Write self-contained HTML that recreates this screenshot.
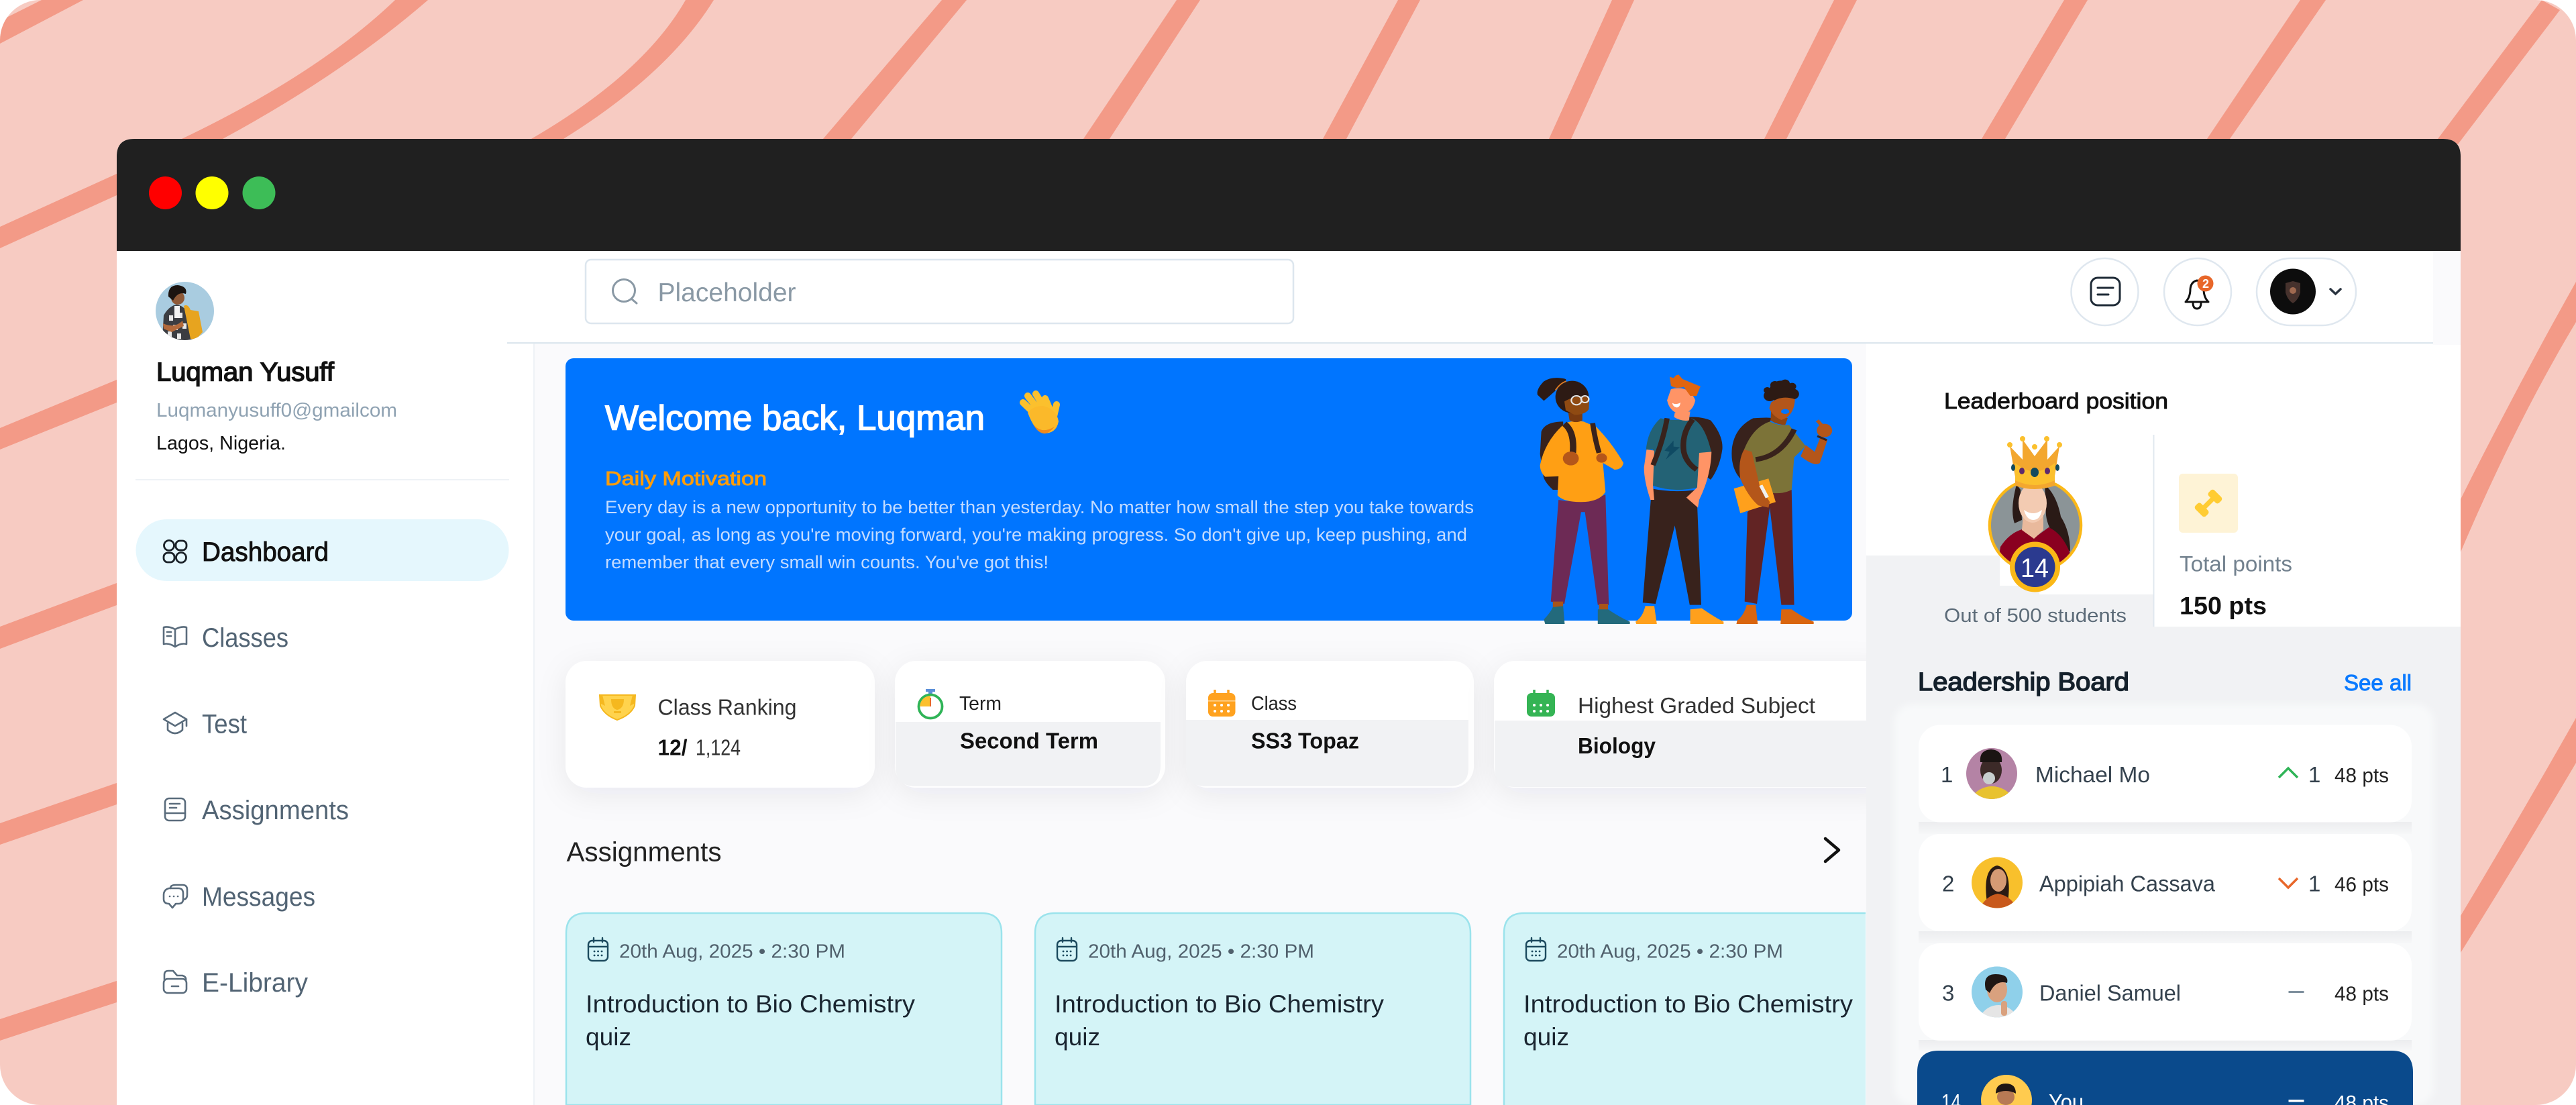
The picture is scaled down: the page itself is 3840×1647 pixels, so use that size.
<!DOCTYPE html>
<html lang="en"><head><meta charset="utf-8"><title>Dashboard</title>
<style>
html,body{margin:0;padding:0;background:#fff;width:3840px;height:1647px;overflow:hidden}
svg{display:block}
text{font-family:"Liberation Sans",sans-serif;fill:#222}
.m{stroke:currentColor;stroke-width:.9}
.h{stroke:currentColor;stroke-width:1.5}
.ic{fill:none;stroke:#5a6c7c;stroke-width:2.6;stroke-linecap:round;stroke-linejoin:round}
</style></head><body>
<svg xmlns="http://www.w3.org/2000/svg" width="3840" height="1647" viewBox="0 0 3840 1647">
<defs>
<clipPath id="pg"><rect width="3840" height="1647" rx="60"/></clipPath>
<clipPath id="main"><rect x="796" y="511" width="1986" height="1136"/></clipPath>
<clipPath id="av0"><circle cx="275.500" cy="463.500" r="43.500"/></clipPath>
<clipPath id="avB"><circle cx="3034" cy="783" r="66"/></clipPath>
<clipPath id="av1"><circle cx="2969" cy="1153" r="38"/></clipPath>
<clipPath id="av2"><circle cx="2977" cy="1315.500" r="38"/></clipPath>
<clipPath id="av3"><circle cx="2977" cy="1478.500" r="38"/></clipPath>
<clipPath id="av4"><circle cx="2991" cy="1640" r="38"/></clipPath>
<filter id="sh" x="-20%" y="-40%" width="140%" height="190%"><feDropShadow dx="0" dy="10" stdDeviation="22" flood-color="#1c2a3a" flood-opacity=".07"/></filter>
<filter id="soft" x="-5%" y="-5%" width="110%" height="110%"><feGaussianBlur stdDeviation="5"/></filter>
<linearGradient id="gap" x1="0" y1="0" x2="0" y2="1"><stop offset="0" stop-color="#ecedef"/><stop offset="1" stop-color="#f6f7f8"/></linearGradient>
<g id="cal" fill="none" stroke="#1c4a5e" stroke-width="2.4" stroke-linecap="round"><rect x="877" y="1402" width="29" height="30" rx="6"/><path d="M877 1411H906M885 1398V1404M898 1398V1404"/><path d="M886 1418h.1M891.500 1418h.1M897 1418h.1M886 1424h.1M891.500 1424h.1M897 1424h.1" stroke-width="2.800"/></g>
</defs>
<g clip-path="url(#pg)">
<rect width="3840" height="1647" fill="#f7cbc2"/>
<g fill="#f39a87">
<path d="M62 0H124L0 65V30L12 25Z"/>
<path d="M589 0H638Q511 110 332 207H271Q474 110 589 0Z" opacity="0"/>
<path d="M589 0H638Q570 130 500 230L332 320L271 207Z" opacity="0"/>
<path d="M589 0H638C590 98 470 300 332 480H271C390 320 530 110 589 0Z" opacity="0"/>
<path d="M589 0H638Q565 125 498 225T400 340L332 207H271L370 110Z" opacity="0"/>
<path d="M589 0H638Q560 155 400 207H332Q520 150 589 0Z" opacity="0"/>
<path d="M589 0H638C590 95 530 190 470 207H271C360 190 520 110 589 0Z" opacity="0"/>
<path d="M589 0H638Q515 190 332 207H271Q480 180 589 0Z" opacity="0"/>
<polygon points="589,0 638,0 497,107 332,207 271,207 452,107" opacity="0"/>
<path d="M589 0H638Q511 110 332 207H271Q474 110 589 0Z"/>
<polygon points="174,259 174,291 0,370 0,338"/>
<polygon points="174,566 174,600 0,670 0,638"/>
<polygon points="174,869 174,902 0,967 0,934"/>
<polygon points="174,1167 174,1199 0,1259 0,1227"/>
<polygon points="174,1462 174,1494 0,1551 0,1519"/>
<path d="M1022 0H1064Q996 110 840 207H792Q959 110 1022 0Z"/>
<polygon points="1404,0 1441,0 1269,207 1227,207"/>
<polygon points="1754,0 1789,0 1654,207 1615,207"/>
<polygon points="2084,0 2117,0 2007,207 1972,207"/>
<polygon points="2403,0 2436,0 2342,207 2309,207"/>
<polygon points="2734,0 2768,0 2663,207 2630,207"/>
<polygon points="3077,0 3112,0 2989,207 2954,207"/>
<polygon points="3429,0 3467,0 3324,207 3290,207"/>
<polygon points="3789,0 3816,15 3664,215 3634,207"/>
<path d="M3668 744Q3750 580 3840 420V480Q3750 630 3668 823Z"/>
<path d="M3668 1365Q3755 1220 3840 1070V1137Q3755 1281 3668 1420Z"/>
</g>
<path d="M174 1647V233Q174 207 200 207H3642Q3668 207 3668 233V1647Z" fill="#fff"/>
<path d="M174 374V233Q174 207 200 207H3642Q3668 207 3668 233V374Z" fill="#202020"/>
<rect x="796" y="511" width="1986" height="1136" fill="#fafafc"/>
<rect x="3627" y="374" width="41" height="140" fill="#fafafc"/>
<path d="M2782 828H2981V873H3040V886H3210V934H3668V1647H2782Z" fill="#f1f2f4"/>
<rect x="2824" y="1050" width="804" height="597" rx="26" fill="#f8f9fa" filter="url(#soft)"/>
<rect x="2860" y="1225" width="735" height="18" fill="url(#gap)"/>
<rect x="2860" y="1388" width="735" height="18" fill="url(#gap)"/>
<rect x="2860" y="1550" width="735" height="16" fill="url(#gap)"/>
<circle cx="246.500" cy="287.500" r="24.500" fill="#ff0000"/>
<circle cx="316" cy="287.500" r="24.500" fill="#ffff00"/>
<circle cx="386" cy="287.500" r="24.500" fill="#3dbd57"/>

<!-- sidebar -->
<rect x="795" y="511" width="2" height="1136" fill="#eef2f6"/>
<rect x="756" y="510" width="2871" height="2.500" fill="#dfe8ef"/>
<rect x="202" y="714" width="557" height="2" fill="#eef2f6"/>
<g clip-path="url(#av0)"><rect x="232" y="420" width="87" height="87" fill="#a9cce0"/>
<path d="M242 507L244 470Q252 456 263 454Q276 456 282 470L288 507Z" fill="#3b3d42"/>
<path d="M252 470h6v8h-6zM266 466h6v8h-6zM258 484h7v8h-7zM272 482h6v8h-6zM250 494h6v8h-6zM264 497h6v8h-6z" fill="#e8e8e8"/>
<rect x="260" y="456" width="8" height="18" fill="#f3f3f3"/>
<path d="M274 456Q280 452 284 462L296 464L302 495L292 506L284 505Z" fill="#e7a41f"/>
<circle cx="265" cy="444" r="10" fill="#8f5a38"/><path d="M251 442Q250 425 265 425Q280 427 277 438Q265 434 258 448Z" fill="#1c1410"/>
<path d="M243 482Q260 490 272 478L274 486L256 495L244 490Z" fill="#b26a3c"/></g>
<text x="233" y="567.500" font-size="39" textLength="265" lengthAdjust="spacingAndGlyphs" class="h" color="#111" style="fill:#111">Luqman Yusuff</text>
<text x="233" y="621" font-size="29" textLength="359" lengthAdjust="spacingAndGlyphs" style="fill:#8fa2b2">Luqmanyusuff0@gmailcom</text>
<text x="233" y="670" font-size="29" textLength="193" lengthAdjust="spacingAndGlyphs" style="fill:#111">Lagos, Nigeria.</text>
<rect x="202.500" y="774" width="556" height="92" rx="46" fill="#e5f7fd"/>
<g fill="none" stroke="#1a2128" stroke-width="2.800"><circle cx="252" cy="813" r="7.500"/><rect x="262" y="806" width="16" height="14" rx="6"/><rect x="244" y="824" width="16" height="14" rx="6"/><circle cx="270" cy="831" r="7.500"/></g>
<text x="301" y="836" font-size="40" textLength="189" lengthAdjust="spacingAndGlyphs" class="m" color="#111" style="fill:#111">Dashboard</text>
<g class="ic"><path d="M261 938Q252 933 244 935V960Q252 958 261 964Q270 958 278 960V935Q270 933 261 938V964"/><path d="M249 942H255M249 948H255"/></g>
<text x="301" y="964" font-size="40" textLength="129" lengthAdjust="spacingAndGlyphs" style="fill:#526474">Classes</text>
<g class="ic"><path d="M261 1062L244 1072L261 1082L278 1072Z"/><path d="M250 1078V1088Q261 1098 272 1088V1078M278 1072V1082"/></g>
<text x="301" y="1092.500" font-size="40" textLength="67" lengthAdjust="spacingAndGlyphs" style="fill:#526474">Test</text>
<g class="ic"><rect x="246" y="1190" width="30" height="33" rx="6"/><path d="M246 1212H276M253 1198H268M253 1204H263"/></g>
<text x="301" y="1221" font-size="40" textLength="219" lengthAdjust="spacingAndGlyphs" style="fill:#526474">Assignments</text>
<g class="ic"><path d="M252 1324Q244 1326 244 1334V1340Q244 1347 252 1347L257 1353L262 1347H266Q273 1347 273 1340V1332Q273 1324 266 1324Z"/><path d="M254 1324Q254 1319 262 1319H272Q279 1319 279 1326V1334Q279 1340 273 1341"/><path d="M253 1336h.1M259 1336h.1M265 1336h.1"/></g>
<text x="301" y="1350" font-size="40" textLength="169" lengthAdjust="spacingAndGlyphs" style="fill:#526474">Messages</text>
<g class="ic"><path d="M245 1460V1453Q245 1447 251 1447H258L264 1454H272Q278 1456 277 1461"/><rect x="244" y="1459" width="34" height="21" rx="6"/><path d="M256 1470H266"/></g>
<text x="301" y="1478" font-size="40" textLength="158" lengthAdjust="spacingAndGlyphs" style="fill:#526474">E-Library</text>

<!-- topbar -->
<rect x="873" y="387" width="1055" height="95" rx="8" fill="#fff" stroke="#dde6ee" stroke-width="2.500"/>
<circle cx="930" cy="433" r="16.500" fill="none" stroke="#8a99a5" stroke-width="3"/><path d="M942 446L949 452" stroke="#8a99a5" stroke-width="3" stroke-linecap="round"/>
<text x="980.500" y="449" font-size="39" textLength="206" lengthAdjust="spacingAndGlyphs" style="fill:#8a99a5">Placeholder</text>
<circle cx="3137.500" cy="435" r="50" fill="#fff" stroke="#dfe7ef" stroke-width="2.500"/>
<rect x="3117" y="414" width="43" height="41" rx="10" fill="none" stroke="#1e2a36" stroke-width="3"/><path d="M3127 429H3150M3127 439H3143" stroke="#1e2a36" stroke-width="3" stroke-linecap="round"/>
<circle cx="3276" cy="435" r="50" fill="#fff" stroke="#dfe7ef" stroke-width="2.500"/>
<path d="M3258 450Q3265 443 3265 431Q3266 420 3275 418Q3285 420 3285 431Q3285 443 3292 450Z" fill="none" stroke="#111" stroke-width="3" stroke-linejoin="round"/><path d="M3269 451Q3269 460 3275 460Q3281 460 3281 451" fill="none" stroke="#111" stroke-width="3"/>
<circle cx="3287.500" cy="422.500" r="12" fill="#e8672a"/><text x="3283" y="429" font-size="18" font-weight="bold" style="fill:#fff">2</text>
<rect x="3364" y="385" width="148" height="100" rx="50" fill="#fff" stroke="#dfe7ef" stroke-width="2.500"/>
<circle cx="3418" cy="434.500" r="34" fill="#0d0d0d"/><path d="M3407 422L3418 419L3429 422L3429 436Q3426 447 3418 452Q3410 447 3407 436Z" fill="#46322d"/><circle cx="3418" cy="433" r="5" fill="#a06a50"/>
<path d="M3474 431L3481.500 438L3489 431" fill="none" stroke="#2a3440" stroke-width="3.500" stroke-linecap="round"/>

<!-- banner -->
<rect x="843" y="534" width="1918" height="391" rx="12" fill="#0075ff"/>
<text x="902" y="640.500" font-size="52" textLength="566" lengthAdjust="spacingAndGlyphs" class="h" color="#fff" style="fill:#fff">Welcome back, Luqman</text>
<g stroke="#fbc02d" stroke-width="10" stroke-linecap="round" fill="none"><path d="M1548 622L1525 600M1553 617L1532 590M1560 613L1544 587M1567 615L1558 594M1570 625L1575 603"/></g>
<path d="M1532 615Q1540 605 1555 605Q1575 610 1578 628Q1575 645 1558 646Q1543 645 1532 615Z" fill="#fbb92a"/><path d="M1540 632Q1552 648 1572 636Q1562 648 1555 646Q1546 644 1540 632Z" fill="#f08a1d"/>
<text x="902" y="723" font-size="29" textLength="241" lengthAdjust="spacingAndGlyphs" class="m" color="#ff9d0a" style="fill:#ff9d0a">Daily Motivation</text>
<text x="902" y="765" font-size="27" textLength="1295" lengthAdjust="spacingAndGlyphs" style="fill:#c4dcff">Every day is a new opportunity to be better than yesterday. No matter how small the step you take towards</text>
<text x="902" y="806" font-size="27" textLength="1285" lengthAdjust="spacingAndGlyphs" style="fill:#c4dcff">your goal, as long as you're moving forward, you're making progress. So don't give up, keep pushing, and</text>
<text x="902" y="847" font-size="27" textLength="661" lengthAdjust="spacingAndGlyphs" style="fill:#c4dcff">remember that every small win counts. You've got this!</text>

<!-- students -->
<g transform="translate(2200,500) scale(.3827,.3333)">
<path d="M255 430Q270 385 340 385L350 690L300 690Q262 650 262 620L250 530Z" fill="#38221c"/>
<path d="M322 735Q410 755 505 712L518 1205L475 1205L425 790L410 790L345 1200L292 1190Z" fill="#6d2a55"/>
<path d="M300 1190H340V1220H300ZM480 1200H515V1230H480Z" fill="#a8541a"/>
<path d="M270 1290L265 1270Q290 1240 300 1215L340 1210L346 1290ZM475 1290L475 1225L515 1225Q560 1260 600 1280L600 1290Z" fill="#236a7c"/>
<path d="M345 395Q370 378 420 385L470 410Q530 480 575 570Q570 600 540 600L495 570L505 700Q480 745 410 745Q340 745 318 715L322 630L270 632Q250 610 250 580Q270 470 345 395Z" fill="#ff9f14"/>
<path d="M345 395Q385 430 378 525" fill="none" stroke="#38221c" stroke-width="25"/><path d="M455 392Q465 470 480 525" fill="none" stroke="#38221c" stroke-width="20"/>
<circle cx="370" cy="550" r="31" fill="#b4561a"/><circle cx="490" cy="548" r="21" fill="#b4561a"/>
<path d="M360 345L415 350L415 380Q390 395 365 380Z" fill="#7a3a10"/>
<path d="M350 195Q300 180 265 205Q235 240 240 265L265 292Q310 250 352 200Z" fill="#2d1a14"/>
<ellipse cx="375" cy="275" rx="65" ry="72" fill="#2d1a14"/>
<path d="M345 295Q400 260 442 280L440 330Q425 355 385 355L350 335Z" fill="#8f4a12"/>
<g fill="none" stroke="#e6e6e6" stroke-width="6"><circle cx="392" cy="290" r="20"/><circle cx="425" cy="285" r="15"/></g>
<path d="M310 245Q330 212 352 205" fill="none" stroke="#e07b20" stroke-width="5"/>
<path d="M800 370Q860 355 915 380Q965 450 960 510Q950 590 915 645L860 600Z" fill="#38221c"/>
<path d="M685 685Q770 705 860 690L878 1205L833 1205L775 850L700 1200L650 1195Z" fill="#38221c"/>
<path d="M625 1290L622 1280Q650 1260 660 1210L695 1210L705 1290ZM835 1290L835 1225L880 1220Q930 1260 965 1280L965 1290Z" fill="#ffa01c"/>
<path d="M720 370Q770 385 840 370Q890 390 917 520L870 530L862 680Q770 705 685 670L690 510L663 510Q670 420 720 370Z" fill="#236275"/>
<path d="M665 510L695 515L690 670L695 735L680 735Q655 650 655 590ZM870 525L918 520Q915 630 870 735L865 770L820 725L862 680Z" fill="#ff9466"/>
<path d="M745 370Q730 470 690 580" fill="none" stroke="#38221c" stroke-width="20"/><path d="M845 375Q800 440 810 520Q820 570 860 600" fill="none" stroke="#38221c" stroke-width="22"/>
<path d="M770 470L735 515L755 520L740 555L795 500L770 497Z" fill="#0f4a63"/>
<path d="M775 345L835 340L830 380Q800 385 772 365Z" fill="#ff9466"/>
<path d="M760 240Q830 220 855 290Q845 345 800 352Q755 345 745 290Z" fill="#ff9466"/>
<path d="M755 185L770 190L780 178L790 175L805 195L875 228L860 270L835 270L810 230Q780 240 760 225Z" fill="#e0650f"/>
<path d="M765 302Q780 312 797 300Q795 322 782 322Q768 320 765 302Z" fill="#fff"/>
<path d="M1080 370Q1150 365 1150 370L1090 620L1030 640Q990 590 998 500Q1010 410 1080 370Z" fill="#38221c"/>
<path d="M1130 700L1230 690L1240 1205L1190 1205L1145 770L1095 1200L1047 1190L1058 790Z" fill="#622424"/>
<path d="M1015 1290L1018 1275Q1045 1250 1055 1205L1090 1205L1098 1290ZM1187 1290L1190 1225L1230 1225Q1280 1265 1316 1280L1316 1290Z" fill="#d9650f"/>
<path d="M1145 385Q1180 405 1220 400L1285 495L1240 545L1230 690Q1190 715 1120 700L1090 620L1045 510Q1080 410 1145 385Z" fill="#7c7338"/>
<path d="M1090 555Q1190 540 1240 420" fill="none" stroke="#38221c" stroke-width="22"/>
<path d="M1265 540L1285 490L1320 520L1340 460L1370 465L1340 570Q1320 590 1265 540Z" fill="#b4561a"/>
<circle cx="1358" cy="425" r="30" fill="#b4561a"/><path d="M1330 380L1350 405" stroke="#b4561a" stroke-width="14"/><path d="M1330 450L1367 468" stroke="#38221c" stroke-width="9"/>
<path d="M1005 685L1140 640L1168 745L1030 795Z" fill="#ffa01c"/>
<path d="M1045 510Q1020 560 1030 640Q1060 720 1100 760L1140 770L1145 745L1105 670L1075 520Z" fill="#b4561a"/>
<path d="M1110 670L1135 725" stroke="#f0f0f0" stroke-width="14"/>
<path d="M1150 340L1215 370L1205 400Q1175 400 1148 380Z" fill="#8f4512"/>
<g fill="#2d1a14"><circle cx="1190" cy="250" r="48"/><circle cx="1145" cy="270" r="24"/><circle cx="1235" cy="262" r="24"/><circle cx="1165" cy="222" r="18"/><circle cx="1205" cy="215" r="18"/><circle cx="1232" cy="228" r="16"/><circle cx="1135" cy="245" r="14"/></g>
<path d="M1150 300Q1190 265 1243 285Q1240 360 1190 378Q1155 360 1143 325Z" fill="#b4561a"/>
<ellipse cx="1205" cy="340" rx="16" ry="11" fill="#0075ff"/>
</g>

<!-- main content clipped to the centre column -->
<g clip-path="url(#main)">
<g filter="url(#sh)"><rect x="843" y="985" width="461" height="189" rx="32" fill="#fff"/></g>
<g filter="url(#sh)"><rect x="1334" y="985" width="403" height="189" rx="32" fill="#fff"/></g>
<g filter="url(#sh)"><rect x="1768" y="985" width="429" height="189" rx="32" fill="#fff"/></g>
<g filter="url(#sh)"><rect x="2227" y="985" width="600" height="189" rx="32" fill="#fff"/></g>
<path d="M1335 1076H1730V1140Q1730 1172 1702 1172H1365Q1335 1172 1335 1142Z" fill="#f1f2f4"/>
<path d="M1768 1073H2189V1145Q2189 1172 2160 1172H1798Q1768 1172 1768 1142Z" fill="#f1f2f4"/>
<path d="M2228 1074H2782V1173H2258Q2228 1173 2228 1143Z" fill="#f1f2f4"/>
</g>
<path d="M894 1036L947 1036L946 1052Q940 1066 920 1073Q901 1066 895 1052Z" fill="#ffd34d" stroke="#f5b81f" stroke-width="2"/><path d="M898 1036H894V1048L902 1052ZM943 1036H947V1048L939 1052Z" fill="#f5b81f"/><path d="M911 1042H930Q930 1056 920 1058Q911 1056 911 1042Z" fill="#f5b81f"/><rect x="915" y="1060" width="11" height="3" fill="#f5b81f"/>
<text x="980.500" y="1065.500" font-size="33" textLength="207" lengthAdjust="spacingAndGlyphs" style="fill:#333">Class Ranking</text>
<text x="980.500" y="1125.500" font-size="33" font-weight="bold" textLength="44" lengthAdjust="spacingAndGlyphs" style="fill:#111">12/</text>
<text x="1037" y="1125.500" font-size="33" textLength="67" lengthAdjust="spacingAndGlyphs" style="fill:#333">1,124</text>
<rect x="1380" y="1027" width="14" height="4" fill="#5b8fd8"/><rect x="1384" y="1030" width="6" height="5" fill="#5b8fd8"/>
<circle cx="1387" cy="1053" r="17.500" fill="#fff" stroke="#2fb457" stroke-width="3.800"/><path d="M1387 1053V1037Q1373 1038 1371 1053Z" fill="#fbc02d"/><path d="M1387 1040V1053" stroke="#e8672a" stroke-width="2"/>
<text x="1430" y="1058" font-size="29" textLength="63" lengthAdjust="spacingAndGlyphs" style="fill:#222">Term</text>
<text x="1431" y="1115.500" font-size="33" font-weight="bold" textLength="206" lengthAdjust="spacingAndGlyphs" style="fill:#111">Second Term</text>
<rect x="1801" y="1033" width="40.500" height="35" rx="7" fill="#ffa21f"/><path d="M1811 1028V1036M1831 1028V1036" stroke="#ffa21f" stroke-width="3.500"/><rect x="1801" y="1044" width="40.500" height="1.500" fill="#ffd79a"/><path d="M1811 1051h.1M1821 1051h.1M1831 1051h.1M1811 1060h.1M1821 1060h.1M1831 1060h.1" stroke="#fff" stroke-width="4" stroke-linecap="round"/>
<text x="1865" y="1058" font-size="29" textLength="68" lengthAdjust="spacingAndGlyphs" style="fill:#222">Class</text>
<text x="1865" y="1115.500" font-size="33" font-weight="bold" textLength="161" lengthAdjust="spacingAndGlyphs" style="fill:#111">SS3 Topaz</text>
<rect x="2276" y="1033" width="42" height="35" rx="7" fill="#34b454"/><path d="M2287 1028V1036M2307 1028V1036" stroke="#34b454" stroke-width="3.500"/><path d="M2287 1051h.1M2297 1051h.1M2307 1051h.1M2287 1060h.1M2297 1060h.1M2307 1060h.1" stroke="#fff" stroke-width="4" stroke-linecap="round"/>
<text x="2352" y="1063" font-size="33" textLength="354" lengthAdjust="spacingAndGlyphs" style="fill:#333">Highest Graded Subject</text>
<text x="2352" y="1123" font-size="33" font-weight="bold" textLength="116" lengthAdjust="spacingAndGlyphs" style="fill:#111">Biology</text>

<!-- assignments -->
<text x="844.500" y="1283.500" font-size="41" textLength="231" lengthAdjust="spacingAndGlyphs" style="fill:#222">Assignments</text>
<path d="M2721 1250L2741 1267L2721 1284" fill="none" stroke="#111" stroke-width="4.500" stroke-linecap="round" stroke-linejoin="round"/>
<g fill="#d4f4f7" stroke="#9be3ec" stroke-width="2.500">
<path d="M844 1647V1391Q844 1361 874 1361H1463Q1493 1361 1493 1391V1647Z"/>
<path d="M1543 1647V1391Q1543 1361 1573 1361H2162Q2192 1361 2192 1391V1647Z"/>
<path d="M2781 1361H2272Q2242 1361 2242 1391V1647H2781Z" stroke="none"/><path d="M2781 1361H2272Q2242 1361 2242 1391V1647" fill="none"/>
</g>
<use href="#cal"/><use href="#cal" transform="translate(699,0)"/><use href="#cal" transform="translate(1398,0)"/>
<text x="923" y="1427.500" font-size="29" textLength="337" lengthAdjust="spacingAndGlyphs" style="fill:#50606c">20th Aug, 2025 • 2:30 PM</text>
<text x="873" y="1509" font-size="37" textLength="491" lengthAdjust="spacingAndGlyphs" style="fill:#1a2530">Introduction to Bio Chemistry</text>
<text x="873" y="1558" font-size="37" textLength="68" lengthAdjust="spacingAndGlyphs" style="fill:#1a2530">quiz</text>
<text x="1622" y="1427.500" font-size="29" textLength="337" lengthAdjust="spacingAndGlyphs" style="fill:#50606c">20th Aug, 2025 • 2:30 PM</text>
<text x="1572" y="1509" font-size="37" textLength="491" lengthAdjust="spacingAndGlyphs" style="fill:#1a2530">Introduction to Bio Chemistry</text>
<text x="1572" y="1558" font-size="37" textLength="68" lengthAdjust="spacingAndGlyphs" style="fill:#1a2530">quiz</text>
<text x="2321" y="1427.500" font-size="29" textLength="337" lengthAdjust="spacingAndGlyphs" style="fill:#50606c">20th Aug, 2025 • 2:30 PM</text>
<text x="2271" y="1509" font-size="37" textLength="491" lengthAdjust="spacingAndGlyphs" style="fill:#1a2530">Introduction to Bio Chemistry</text>
<text x="2271" y="1558" font-size="37" textLength="68" lengthAdjust="spacingAndGlyphs" style="fill:#1a2530">quiz</text>

<!-- leaderboard position -->
<text x="2898" y="609" font-size="33" textLength="334" lengthAdjust="spacingAndGlyphs" class="m" color="#111" style="fill:#111">Leaderboard position</text>
<rect x="3209.500" y="648" width="2" height="286" fill="#e0e8ef"/>
<circle cx="3034" cy="783" r="68" fill="#7d878b" stroke="#fbb817" stroke-width="4.500"/>
<g clip-path="url(#avB)"><rect x="2960" y="715" width="150" height="140" fill="#8b9497"/>
<path d="M3006 722Q2996 760 3003 780L3014 775L3012 730ZM3048 722Q3066 738 3072 770Q3086 792 3086 822L3066 806Q3052 785 3050 768Z" fill="#2a1a16"/>
<path d="M2975 860L2982 815Q2995 795 3014 789L3032 802L3054 786Q3085 800 3095 860Z" fill="#8a0020"/>
<path d="M3016 768H3046V790L3032 803L3014 790Z" fill="#e9b99c"/>
<ellipse cx="3030" cy="750" rx="21" ry="29" fill="#f3cbb2"/><path d="M3017 760Q3031 770 3044 760Q3041 775 3031 775Q3021 775 3017 760Z" fill="#fff"/></g>
<g><path d="M3006 722L2996 665L3015 685L3015 655L3033 680L3052 655L3052 685L3070 665L3061 722Z" fill="#f3a72f"/><path d="M3004 690Q3033 715 3063 690L3063 722Q3033 735 3004 722Z" fill="#fbc02d"/><path d="M3004 716Q3033 730 3063 716V724Q3033 734 3004 724Z" fill="#f3a72f"/><circle cx="2996" cy="663" r="4" fill="#fbc02d"/><circle cx="3015" cy="654" r="4" fill="#fbc02d"/><circle cx="3033" cy="666" r="4" fill="#fbc02d"/><circle cx="3051" cy="654" r="4" fill="#fbc02d"/><circle cx="3070" cy="663" r="4" fill="#fbc02d"/><ellipse cx="3033" cy="704" rx="6" ry="7" fill="#124a5e"/><ellipse cx="3014" cy="702" rx="4" ry="5" fill="#5d2b6d"/><ellipse cx="3052" cy="702" rx="4" ry="5" fill="#5d2b6d"/><ellipse cx="3001" cy="697" rx="3" ry="5" fill="#124a5e"/><ellipse cx="3067" cy="697" rx="3" ry="5" fill="#124a5e"/></g>
<circle cx="3033.500" cy="845" r="37.500" fill="#fbb817"/><circle cx="3033.500" cy="845" r="30" fill="#2b3a8f"/>
<text x="3012" y="860" font-size="40" textLength="42" lengthAdjust="spacingAndGlyphs" style="fill:#fff">14</text>
<text x="2898" y="927" font-size="29" textLength="272" lengthAdjust="spacingAndGlyphs" style="fill:#5c6b78">Out of 500 students</text>
<rect x="3248" y="706" width="88" height="88" rx="6" fill="#fef3d6"/>
<g transform="translate(3292,750) rotate(-45)" fill="#ffcc33"><rect x="-12" y="-3.500" width="24" height="7"/><rect x="-20" y="-11" width="12" height="22" rx="4"/><rect x="8" y="-11" width="12" height="22" rx="4"/></g>
<text x="3249" y="851.500" font-size="32" textLength="168" lengthAdjust="spacingAndGlyphs" style="fill:#72818e">Total points</text>
<text x="3249" y="915.500" font-size="37" font-weight="bold" textLength="130" lengthAdjust="spacingAndGlyphs" style="fill:#111">150 pts</text>

<!-- leadership board -->
<text x="2859" y="1029" font-size="38" textLength="315" lengthAdjust="spacingAndGlyphs" class="h" color="#14202b" style="fill:#14202b">Leadership Board</text>
<text x="3494" y="1029" font-size="33" textLength="101" lengthAdjust="spacingAndGlyphs" class="m" color="#0a7aff" style="fill:#0a7aff">See all</text>
<rect x="2860" y="1080.500" width="735" height="145" rx="32" fill="#fff"/>
<rect x="2860" y="1243" width="735" height="145" rx="32" fill="#fff"/>
<rect x="2860" y="1406" width="735" height="145" rx="32" fill="#fff"/>
<path d="M2858 1647V1598Q2858 1566 2890 1566H3565Q3597 1566 3597 1598V1647Z" fill="#0a4a8c"/>
<text x="2893" y="1166" font-size="33" style="fill:#33404c">1</text>
<g clip-path="url(#av1)"><rect x="2930" y="1114" width="78" height="78" fill="#b483a5"/><path d="M2935 1192Q2950 1172 2969 1172Q2990 1172 3003 1192Z" fill="#e8c22f"/><ellipse cx="2968" cy="1148" rx="16" ry="20" fill="#3c2a28"/><path d="M2952 1136Q2950 1118 2968 1117Q2986 1118 2984 1136Z" fill="#1a1412"/><circle cx="2965" cy="1160" r="9" fill="#c8cfcf"/></g>
<text x="3034" y="1166" font-size="33" textLength="171" lengthAdjust="spacingAndGlyphs" style="fill:#35424e">Michael Mo</text>
<path d="M3397 1159L3411 1145L3425 1159" fill="none" stroke="#2fb457" stroke-width="3.500"/>
<text x="3441" y="1166" font-size="33" style="fill:#33404c">1</text>
<text x="3480" y="1166" font-size="31" textLength="81" lengthAdjust="spacingAndGlyphs" style="fill:#222">48 pts</text>
<text x="2895" y="1328.500" font-size="33" style="fill:#33404c">2</text>
<g clip-path="url(#av2)"><rect x="2938" y="1277" width="78" height="78" fill="#f8c02c"/><path d="M2962 1345Q2955 1295 2977 1290Q3000 1295 2993 1345Z" fill="#2a1a14"/><ellipse cx="2979" cy="1312" rx="12" ry="17" fill="#d59a74"/><path d="M2950 1356Q2960 1335 2978 1332Q2998 1335 3008 1356Z" fill="#c8591c"/></g>
<text x="3040" y="1328.500" font-size="33" textLength="262" lengthAdjust="spacingAndGlyphs" style="fill:#35424e">Appipiah Cassava</text>
<path d="M3397 1309L3411 1323L3425 1309" fill="none" stroke="#e8672a" stroke-width="3.500"/>
<text x="3441" y="1328.500" font-size="33" style="fill:#33404c">1</text>
<text x="3480" y="1328.500" font-size="31" textLength="81" lengthAdjust="spacingAndGlyphs" style="fill:#222">46 pts</text>
<text x="2895" y="1491.500" font-size="33" style="fill:#33404c">3</text>
<g clip-path="url(#av3)"><rect x="2938" y="1440" width="78" height="78" fill="#8fd0ea"/><path d="M2950 1518Q2960 1498 2980 1498Q3000 1500 3008 1518Z" fill="#e5e5e5"/><ellipse cx="2977" cy="1475" rx="15" ry="19" fill="#d9a17e"/><path d="M2960 1475Q2955 1452 2975 1452Q2995 1452 2992 1465Q2975 1460 2966 1480Z" fill="#1f1614"/><rect x="2983" y="1492" width="9" height="22" rx="4" fill="#d9a17e"/></g>
<text x="3040" y="1491.500" font-size="33" textLength="211" lengthAdjust="spacingAndGlyphs" style="fill:#35424e">Daniel Samuel</text>
<rect x="3411.500" y="1477" width="23" height="3" fill="#7f909e"/>
<text x="3480" y="1491.500" font-size="31" textLength="81" lengthAdjust="spacingAndGlyphs" style="fill:#222">48 pts</text>
<text x="2894" y="1654" font-size="33" textLength="29" lengthAdjust="spacingAndGlyphs" style="fill:#fff">14</text>
<g clip-path="url(#av4)"><rect x="2952" y="1602" width="78" height="45" fill="#ffcb4f"/><ellipse cx="2990" cy="1635" rx="13" ry="12" fill="#b87a54"/><path d="M2975 1630Q2975 1615 2990 1615Q3005 1615 3005 1630Q2990 1622 2975 1630Z" fill="#1f1614"/></g>
<text x="3054" y="1654" font-size="33" textLength="52" lengthAdjust="spacingAndGlyphs" style="fill:#fff">You</text>
<rect x="3411.500" y="1639" width="23" height="3.500" fill="#fff"/>
<text x="3480" y="1654" font-size="31" textLength="81" lengthAdjust="spacingAndGlyphs" style="fill:#fff">48 pts</text>
</g>
</svg>
</body></html>
